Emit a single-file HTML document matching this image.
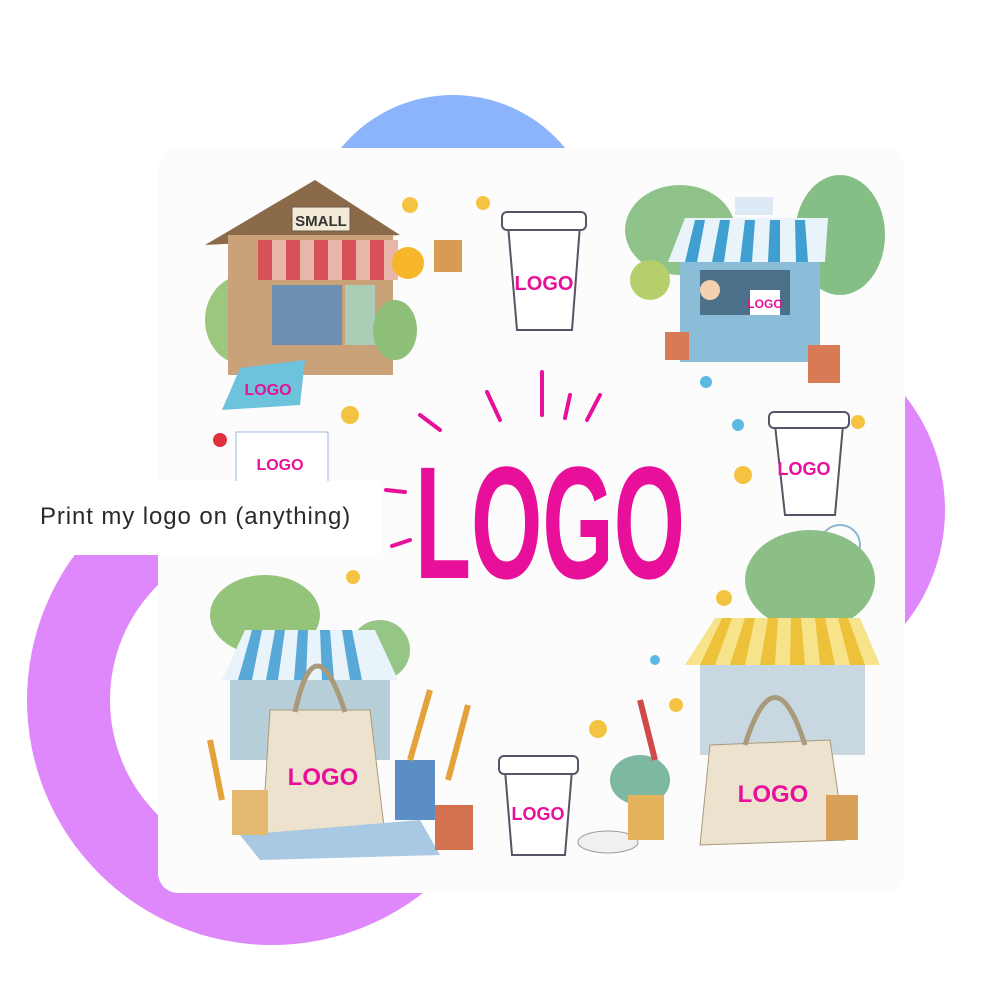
<!DOCTYPE html>
<html><head><meta charset="utf-8"><style>
html,body{margin:0;padding:0;background:#fff;}
body{width:1000px;height:1000px;position:relative;overflow:hidden;font-family:"Liberation Sans",sans-serif;}
.abs{position:absolute;}
.label{position:absolute;left:0;top:481px;width:382px;height:74px;background:#fff;border-radius:0 6px 6px 0;}
.label span{position:absolute;left:40px;top:22px;font-size:24px;color:#2a2a2a;letter-spacing:0.9px;white-space:nowrap;}
</style></head><body>
<svg class="abs" style="left:0;top:0" width="1000" height="1000">
  <circle cx="453" cy="240" r="145" fill="#8cb4fd"/>
  <circle cx="272" cy="700" r="245" fill="#df88fb"/>
  <circle cx="272" cy="700" r="162" fill="#fff"/>
  <circle cx="762" cy="510" r="183" fill="#df88fb"/>
  <rect x="158" y="148" width="747" height="745" rx="20" fill="#fcfcfd"/>
  <g>
    <ellipse cx="245" cy="320" rx="40" ry="45" fill="#9cc87d"/>
    <polygon points="205,245 315,180 400,235" fill="#8b6a4a"/>
    <rect x="228" y="235" width="165" height="140" fill="#c9a27a"/>
    <rect x="258" y="240" width="140" height="40" fill="#e8b6a8"/>
    <g fill="#d8505a"><rect x="258" y="240" width="14" height="40"/><rect x="286" y="240" width="14" height="40"/><rect x="314" y="240" width="14" height="40"/><rect x="342" y="240" width="14" height="40"/><rect x="370" y="240" width="14" height="40"/></g>
    <rect x="272" y="285" width="70" height="60" fill="#6d8fb0"/>
    <rect x="345" y="285" width="30" height="60" fill="#a9cdb5"/>
    <rect x="292" y="207" width="58" height="24" fill="#f3ead8" stroke="#6b5a48"/>
    <text x="321" y="226" font-size="15" font-weight="bold" fill="#333" text-anchor="middle">SMALL</text>
    <ellipse cx="395" cy="330" rx="22" ry="30" fill="#8fc07a"/>
    <polygon points="222,410 240,368 305,360 300,405" fill="#6ec3dc"/>
    <text x="268" y="395" font-size="16" font-weight="bold" fill="#e8109a" text-anchor="middle">LOGO</text>
    <rect x="236" y="432" width="92" height="60" fill="#fff" stroke="#9bb7d8"/>
    <text x="280" y="470" font-size="16" font-weight="bold" fill="#e8109a" text-anchor="middle">LOGO</text>
    <circle cx="408" cy="263" r="16" fill="#f7b52a"/>
    <rect x="434" y="240" width="28" height="32" fill="#d89a55"/>
  </g>
  <g>
    <path d="M508 225 L580 225 L572 330 L517 330 Z" fill="#fff" stroke="#556" stroke-width="2"/>
    <rect x="502" y="212" width="84" height="18" rx="5" fill="#fff" stroke="#556" stroke-width="2"/>
    <text x="544" y="290" font-size="20" font-weight="bold" fill="#e8109a" text-anchor="middle">LOGO</text>
  </g>
  <g>
    <ellipse cx="680" cy="230" rx="55" ry="45" fill="#8fc38a"/>
    <ellipse cx="840" cy="235" rx="45" ry="60" fill="#86bf85"/>
    <ellipse cx="650" cy="280" rx="20" ry="20" fill="#b7cf6a"/>
    <polygon points="668,262 685,218 828,218 825,262" fill="#e9f4fa"/>
    <g fill="#3f9fd1"><polygon points="685,262 695,220 705,220 697,262"/><polygon points="712,262 720,220 730,220 724,262"/><polygon points="740,262 745,220 755,220 752,262"/><polygon points="768,262 770,220 780,220 780,262"/><polygon points="796,262 795,220 805,220 808,262"/></g>
    <rect x="680" y="262" width="140" height="100" fill="#8bbdd9"/>
    <rect x="700" y="270" width="90" height="45" fill="#4c6f8a"/>
    <rect x="750" y="290" width="30" height="25" fill="#fff"/>
    <text x="765" y="308" font-size="12" font-weight="bold" fill="#e8109a" text-anchor="middle">LOGO</text>
    <rect x="735" y="197" width="38" height="18" fill="#dde9f4"/>
    <circle cx="710" cy="290" r="10" fill="#f5d0b0"/>
    <rect x="808" y="345" width="32" height="38" fill="#d87a55"/>
    <rect x="665" y="332" width="24" height="28" fill="#d87a55"/>
  </g>
  <g>
    <path d="M775 425 L843 425 L835 515 L785 515 Z" fill="#fff" stroke="#556" stroke-width="2"/>
    <rect x="769" y="412" width="80" height="16" rx="5" fill="#fff" stroke="#556" stroke-width="2"/>
    <text x="804" y="475" font-size="18" font-weight="bold" fill="#e8109a" text-anchor="middle">LOGO</text>
    <circle cx="840" cy="545" r="20" fill="none" stroke="#8fb7d0" stroke-width="2"/>
  </g>
  <g>
    <ellipse cx="265" cy="615" rx="55" ry="40" fill="#93c47a"/>
    <ellipse cx="380" cy="650" rx="30" ry="30" fill="#96c686"/>
    <polygon points="222,680 245,630 375,630 398,680" fill="#e9f4fa"/>
    <g fill="#58a9d8"><polygon points="238,680 252,630 262,630 252,680"/><polygon points="266,680 275,630 285,630 278,680"/><polygon points="294,680 298,630 308,630 306,680"/><polygon points="322,680 320,630 330,630 334,680"/><polygon points="350,680 342,630 352,630 362,680"/></g>
    <rect x="230" y="680" width="160" height="80" fill="#b7cfd9"/>
    <polygon points="270,710 370,710 385,835 262,840" fill="#ece2cd" stroke="#a89a7a"/>
    <path d="M295 712 Q315 620 345 712" fill="none" stroke="#a89a7a" stroke-width="5"/>
    <text x="323" y="785" font-size="24" font-weight="bold" fill="#e8109a" text-anchor="middle">LOGO</text>
    <polygon points="240,835 420,820 440,855 260,860" fill="#a9c8e4"/>
    <rect x="232" y="790" width="36" height="45" fill="#e4b870"/>
    <rect x="395" y="760" width="40" height="60" fill="#5b8ec4"/>
    <rect x="435" y="805" width="38" height="45" fill="#d4714f"/>
    <g stroke="#e3a23a" stroke-width="6"><line x1="410" y1="760" x2="430" y2="690"/><line x1="448" y1="780" x2="468" y2="705"/><line x1="222" y1="800" x2="210" y2="740"/></g>
  </g>
  <g>
    <path d="M505 770 L572 770 L565 855 L512 855 Z" fill="#fff" stroke="#556" stroke-width="2"/>
    <rect x="499" y="756" width="79" height="18" rx="5" fill="#fff" stroke="#556" stroke-width="2"/>
    <text x="538" y="820" font-size="18" font-weight="bold" fill="#e8109a" text-anchor="middle">LOGO</text>
    <ellipse cx="608" cy="842" rx="30" ry="11" fill="#f0f0f0" stroke="#99a"/>
  </g>
  <g>
    <ellipse cx="810" cy="580" rx="65" ry="50" fill="#8bbf86"/>
    <polygon points="685,665 715,618 860,618 880,665" fill="#f7e38a"/>
    <g fill="#edc13a"><polygon points="700,665 722,618 732,618 715,665"/><polygon points="730,665 745,618 755,618 745,665"/><polygon points="760,665 768,618 778,618 775,665"/><polygon points="790,665 791,618 801,618 805,665"/><polygon points="820,665 815,618 825,618 835,665"/><polygon points="850,665 838,618 848,618 865,665"/></g>
    <rect x="700" y="665" width="165" height="90" fill="#c9d8e0"/>
    <polygon points="710,745 830,740 845,840 700,845" fill="#ece2cd" stroke="#a89a7a"/>
    <path d="M745 745 Q775 650 805 745" fill="none" stroke="#a89a7a" stroke-width="5"/>
    <text x="773" y="802" font-size="24" font-weight="bold" fill="#e8109a" text-anchor="middle">LOGO</text>
    <ellipse cx="640" cy="780" rx="30" ry="25" fill="#7fb8a0"/>
    <rect x="628" y="795" width="36" height="45" fill="#e4b25a"/>
    <rect x="826" y="795" width="32" height="45" fill="#d9a05a"/>
    <line x1="640" y1="700" x2="655" y2="760" stroke="#d04a4a" stroke-width="6"/>
  </g>
  <g fill="#f5c342">
    <circle cx="410" cy="205" r="8"/><circle cx="483" cy="203" r="7"/><circle cx="350" cy="415" r="9"/><circle cx="743" cy="475" r="9"/><circle cx="858" cy="422" r="7"/><circle cx="353" cy="577" r="7"/><circle cx="724" cy="598" r="8"/><circle cx="598" cy="729" r="9"/><circle cx="676" cy="705" r="7"/>
  </g>
  <g fill="#5cb9e3"><circle cx="738" cy="425" r="6"/><circle cx="655" cy="660" r="5"/><circle cx="706" cy="382" r="6"/></g>
  <circle cx="220" cy="440" r="7" fill="#e03040"/>
  <g stroke="#e8109a" stroke-width="4" stroke-linecap="round">
    <line x1="420" y1="415" x2="440" y2="430"/><line x1="487" y1="392" x2="500" y2="420"/><line x1="542" y1="372" x2="542" y2="415"/><line x1="570" y1="395" x2="565" y2="418"/><line x1="600" y1="395" x2="587" y2="420"/><line x1="386" y1="490" x2="405" y2="492"/><line x1="392" y1="546" x2="410" y2="540"/>
  </g>
  <text x="550" y="578" font-family="Liberation Sans Narrow, Liberation Sans, sans-serif" font-size="160" font-weight="bold" fill="#e8109a" text-anchor="middle" textLength="270" lengthAdjust="spacingAndGlyphs">LOGO</text>
</svg>
<div class="label"><span>Print my logo on (anything)</span></div>
</body></html>
